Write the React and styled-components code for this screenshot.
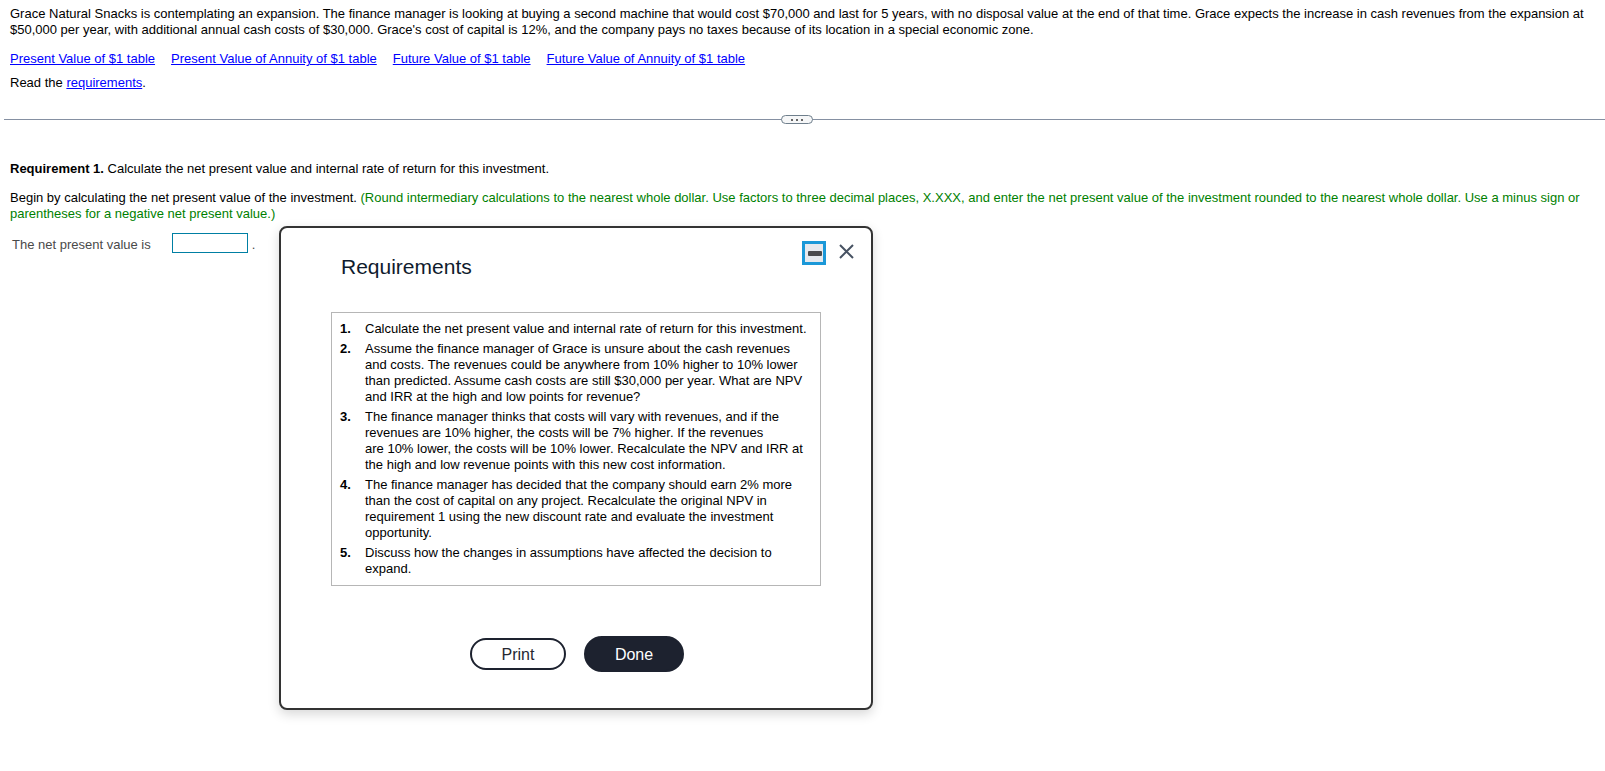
import React from "react";
import styled, { createGlobalStyle } from "styled-components";

const GlobalStyle = createGlobalStyle`
  *, *::before, *::after { box-sizing: border-box; }
  body {
    margin: 0;
    background: #fff;
    color: #000;
    font: 13px/16px Arial, "Liberation Sans", sans-serif;
  }
`;

const Page = styled.main`
  position: relative;
  min-height: 100vh;
`;

const Section = styled.section`
  display: flex;
  flex-direction: column;
  padding: ${(p) => p.$top}px 12px 0 10px;
`;

const Text = styled.p`
  margin: 0 0 ${(p) => p.$gap || 0}px;
`;

const Link = styled.a`
  color: #0000ff;
  text-decoration: underline;
`;

const TableLinks = styled.nav`
  display: flex;
  flex-wrap: wrap;
  gap: 16px;
  margin-bottom: 8px;
`;

const Hint = styled.span`
  color: #007f00;
`;

const Divider = styled.div`
  display: grid;
  align-items: center;
  margin: 24px 0 0 4px;
`;

const Rule = styled.hr`
  grid-area: 1 / 1;
  width: 100%;
  margin: 0;
  border: 0;
  border-top: 1px solid #8590a2;
`;

const Handle = styled.button`
  grid-area: 1 / 1;
  justify-self: center;
  display: flex;
  align-items: center;
  justify-content: center;
  gap: 3px;
  width: 32px;
  height: 9px;
  margin-right: 15px;
  padding: 0;
  border: 1px solid #6f7f8c;
  border-radius: 5px;
  background: #f6f7f8;
`;

const Dot = styled.span`
  width: 2px;
  height: 2px;
  background: #666;
`;

const AnswerRow = styled.div`
  display: flex;
  align-items: flex-end;
  padding: 11px 0 0 2px;
  color: #4a4a4a;
`;

const AnswerInput = styled.input`
  width: 76px;
  height: 20px;
  margin: 0 4px 0 21px;
  padding: 0 4px;
  border: 1px solid #007fa3;
  background: #fff;
  font: inherit;
`;

const Dialog = styled.div`
  position: absolute;
  top: 226px;
  left: 279px;
  width: 594px;
  padding: 13px 50px 36px;
  border: 2px solid #333;
  border-radius: 8px;
  background: #fff;
  box-shadow: 0 4px 12px rgba(0, 0, 0, 0.16);
`;

const DialogHeader = styled.header`
  display: flex;
  align-items: flex-start;
  justify-content: space-between;
  margin-right: -39px;
  padding-left: 10px;
`;

const DialogTitle = styled.h2`
  margin: 14px 0 0;
  color: #0f1b2d;
  font-size: 21px;
  font-weight: 400;
  line-height: 24px;
`;

const WindowButtons = styled.div`
  display: flex;
  gap: 10px;
`;

const IconButton = styled.button`
  display: flex;
  align-items: center;
  justify-content: center;
  width: 24px;
  height: 24px;
  padding: 0;
  border: ${(p) => (p.$active ? "3px solid #1b98d8" : "0")};
  background: ${(p) => (p.$active ? "#e6e9ee" : "transparent")};
`;

const Requirements = styled.ol`
  display: flex;
  flex-direction: column;
  gap: 4px;
  margin: 33px 0 50px;
  padding: 8px 12px 8px 8px;
  border: 1px solid #b6b6b6;
  list-style: none;
  counter-reset: requirement;
`;

const Requirement = styled.li`
  display: grid;
  grid-template-columns: 25px 1fr;
  counter-increment: requirement;

  &::before {
    content: counter(requirement) ".";
    font-weight: 700;
  }
`;

const Actions = styled.footer`
  display: flex;
  align-items: center;
  justify-content: center;
  gap: 18px;
  padding-left: 2px;
`;

const PillButton = styled.button`
  width: ${(p) => (p.$primary ? 100 : 96)}px;
  height: ${(p) => (p.$primary ? 36 : 32)}px;
  padding: 2px 0 0;
  border: 2px solid #1d222f;
  border-radius: 18px;
  background: ${(p) => (p.$primary ? "#1d222f" : "#fff")};
  color: ${(p) => (p.$primary ? "#fff" : "#252831")};
  font: 16px/20px Arial, "Liberation Sans", sans-serif;
`;

const tables = [
  "Present Value of $1 table",
  "Present Value of Annuity of $1 table",
  "Future Value of $1 table",
  "Future Value of Annuity of $1 table",
];

const requirements = [
  "Calculate the net present value and internal rate of return for this investment.",
  "Assume the finance manager of Grace is unsure about the cash revenues and costs. The revenues could be anywhere from 10% higher to 10% lower than predicted. Assume cash costs are still $30,000 per year. What are NPV and IRR at the high and low points for revenue?",
  "The finance manager thinks that costs will vary with revenues, and if the revenues are 10% higher, the costs will be 7% higher. If the revenues are\u00a010% lower, the costs will be 10% lower. Recalculate the NPV and IRR at the high and low revenue points with this new cost information.",
  "The finance manager has decided that the company should earn 2% more than the cost of capital on any project. Recalculate the original NPV in requirement 1 using the new discount rate and evaluate the investment opportunity.",
  "Discuss how the changes in assumptions have affected the decision to expand.",
];

export default function App() {
  return (
    <>
      <GlobalStyle />
      <Page>
        <Section $top={6}>
          <Text $gap={13}>
            Grace Natural Snacks is contemplating an expansion. The finance
            manager is looking at buying a second machine that would cost
            $70,000 and last for 5 years, with no disposal value at the end of
            that time. Grace expects the increase in cash revenues from the
            expansion at $50,000 per year, with additional annual cash costs of
            $30,000. Grace's cost of capital is 12%, and the company pays no
            taxes because of its location in a special economic zone.
          </Text>
          <TableLinks>
            {tables.map((name) => (
              <Link href="#" key={name}>{name}</Link>
            ))}
          </TableLinks>
          <Text>
            Read the <Link href="#requirements">requirements</Link>.
          </Text>
        </Section>

        <Divider>
          <Rule />
          <Handle type="button" aria-label="Resize question panel">
            <Dot /><Dot /><Dot />
          </Handle>
        </Divider>

        <Section $top={37}>
          <Text $gap={13}>
            <strong>Requirement 1.</strong> Calculate the net present value and
            internal rate of return for this investment.
          </Text>
          <Text>
            Begin by calculating the net present value of the investment.{" "}
            <Hint>
              (Round intermediary calculations to the nearest whole dollar. Use
              factors to three decimal places, X.XXX, and enter the net present
              value of the investment rounded to the nearest whole dollar. Use a
              minus sign or parentheses for a negative net present value.)
            </Hint>
          </Text>
          <AnswerRow>
            <label htmlFor="npv">The net present value is</label>
            <AnswerInput id="npv" type="text" />
            <span>.</span>
          </AnswerRow>
        </Section>

        <Dialog role="dialog" aria-labelledby="dialog-title" id="requirements">
          <DialogHeader>
            <DialogTitle id="dialog-title">Requirements</DialogTitle>
            <WindowButtons>
              <IconButton type="button" $active aria-label="Minimize">
                <svg width="18" height="18" viewBox="0 0 18 18">
                  <rect x="3" y="7" width="14" height="5" rx="1" fill="#4a4a4d" />
                </svg>
              </IconButton>
              <IconButton type="button" aria-label="Close">
                <svg width="24" height="24" viewBox="0 0 24 24">
                  <path d="M4 4L17 17M17 4L4 17" stroke="#475262" strokeWidth="2" fill="none" />
                </svg>
              </IconButton>
            </WindowButtons>
          </DialogHeader>
          <Requirements>
            {requirements.map((item) => (
              <Requirement key={item}>
                <span>{item}</span>
              </Requirement>
            ))}
          </Requirements>
          <Actions>
            <PillButton type="button">Print</PillButton>
            <PillButton type="button" $primary>Done</PillButton>
          </Actions>
        </Dialog>
      </Page>
    </>
  );
}
